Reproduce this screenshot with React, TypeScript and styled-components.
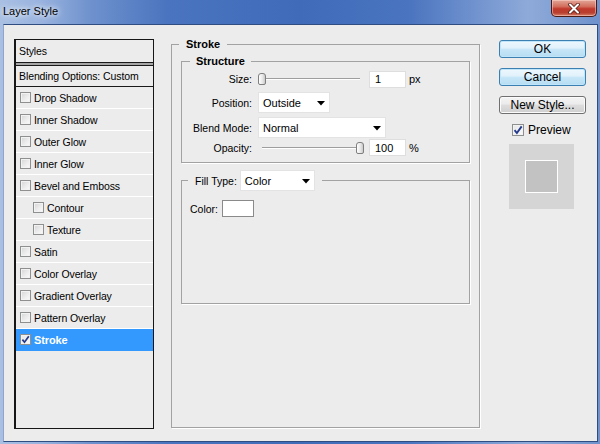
import React from 'react';
import styled, { createGlobalStyle } from 'styled-components';

const Global = createGlobalStyle`
  html, body { margin: 0; padding: 0; background: #fff; }
  body { font-family: "Liberation Sans", Arial, sans-serif; font-size: 10.5px; color: #000; }
  * { box-sizing: border-box; }
`;

const Window = styled.div`
  width: 600px;
  height: 444px;
  display: flex;
  flex-direction: column;
  padding: 0 2px 2px 3px;
  overflow: hidden;
  background: linear-gradient(90deg, #a9c0e3 0%, #98b2de 7%, #6f92cd 15%, #4a74bf 28%, #3f6bb9 50%, #4a74bf 68%, #7a9ad2 82%, #8eaad9 88%, #6f92cc 100%);
`;

const TitleBar = styled.div`
  height: 24px;
  flex: none;
  display: flex;
  align-items: flex-start;
  justify-content: space-between;
`;

const TitleText = styled.div`
  margin-top: 4px;
  height: 16px;
  line-height: 15px;
  font-size: 11px;
  color: #000;
  text-shadow: 0 0 5px #fff, 0 0 8px #e8f0fb;
`;

const CloseButton = styled.div`
  width: 46px;
  height: 17px;
  margin-right: 1px;
  border: 1px solid #4a1a14;
  border-top: none;
  border-radius: 0 0 5px 5px;
  background: linear-gradient(#e3a597 0%, #d3705f 40%, #c0392b 55%, #b8402f 80%, #d7806a 100%);
  box-shadow: inset 0 0 0 1px rgba(255, 220, 210, 0.5);
  display: flex;
  align-items: center;
  justify-content: center;
`;

const Client = styled.div`
  flex: 1;
  display: flex;
  align-items: flex-start;
  background: #ececec;
  border: 1px solid #2f4d80;
  border-left-color: #8ea6cc;
  padding: 13px 0 0 10px;
`;

/* ---------- Styles list ---------- */
const StylesPanel = styled.div`
  width: 140px;
  height: 390px;
  margin-top: 1px;
  flex: none;
  border: 1px solid #161616;
  border-left-width: 2px;
  background: #ececec;
  letter-spacing: -0.1px;
`;

const PanelHeader = styled.div`
  height: 22px;
  display: flex;
  align-items: center;
  padding-left: 3px;
`;

const DoubleRule = styled.div`
  height: 4px;
  border-top: 1px solid #1a1a1a;
  border-bottom: 1px solid #1a1a1a;
  background: #a6a6a6;
`;

const BlendRow = styled.div`
  height: 21px;
  display: flex;
  align-items: center;
  padding-left: 3px;
  border-bottom: 1px solid #1a1a1a;
`;

const StyleRow = styled.div<{ $indent?: boolean; $selected?: boolean }>`
  height: 22px;
  display: flex;
  align-items: center;
  gap: 3px;
  padding-left: ${(p) => (p.$indent ? 17 : 4)}px;
  border-bottom: 1px solid ${(p) => (p.$selected ? '#3399ff' : '#ffffff')};
  background: ${(p) => (p.$selected ? '#3399ff' : 'transparent')};
  color: ${(p) => (p.$selected ? '#fff' : '#000')};
  font-weight: ${(p) => (p.$selected ? 'bold' : 'normal')};
  font-size: ${(p) => (p.$selected ? '11px' : '10.5px')};
`;

const Box = styled.span<{ $size: number }>`
  width: ${(p) => p.$size}px;
  height: ${(p) => p.$size}px;
  flex: none;
  border: 1px solid #8e8f8f;
  background: linear-gradient(135deg, #d4d4d4 0%, #ececec 55%, #fbfbfb 100%);
  box-shadow: inset 0 0 0 1px #f2f2f2;
  display: flex;
  align-items: center;
  justify-content: center;
`;

const CheckedBox = styled(Box)`
  background: linear-gradient(135deg, #e6e6e6 0%, #fafafa 100%);
`;

const CheckBox: React.FC<{ checked?: boolean; size?: number }> = ({ checked, size = 11 }) =>
  checked ? (
    <CheckedBox $size={size}>
      <svg width={size - 2} height={size - 2} viewBox="0 0 9 9">
        <path d="M1.4 4.6 L3.5 7.2 L7.8 1.2" fill="none" stroke="#243a8c" strokeWidth="1.7" />
      </svg>
    </CheckedBox>
  ) : (
    <Box $size={size} />
  );

/* ---------- Main groups ---------- */
const Group = styled.fieldset<{ $w: number; $h: number }>`
  margin: 0;
  padding: 0;
  min-width: 0;
  width: ${(p) => p.$w}px;
  height: ${(p) => p.$h}px;
  flex: none;
  border: 1px solid #a2a2a2;
  box-shadow: 1px 1px 0 #ffffff;
`;

const MainGroup = styled(Group)`
  margin-left: 17px;
`;

const Legend = styled.legend<{ $ml: number; $px: number }>`
  margin-left: ${(p) => p.$ml}px;
  padding: 0 ${(p) => p.$px}px;
  font-weight: bold;
  font-size: 11px;
  line-height: 13px;
`;

const FillLegend = styled.legend`
  margin-left: 6px;
  padding: 0 7px;
  display: flex;
  align-items: center;
  gap: 3px;
  font-size: 10.5px;
`;

const GroupBody = styled.div`
  padding: 4px 9px 0 9px;
  display: flex;
  flex-direction: column;
  gap: 7px;
`;

const FormGrid = styled.div`
  display: grid;
  grid-template-columns: 70px 1fr;
  grid-template-rows: 20px 27px 23px 17px;
  column-gap: 6px;
  align-items: center;
  margin-top: 1px;
`;

const Label = styled.span`
  text-align: right;
  white-space: nowrap;
`;

const Controls = styled.div`
  display: flex;
  align-items: center;
`;

const Slider = styled.div`
  position: relative;
  width: 108px;
  height: 16px;
  flex: none;
`;

const Track = styled.div`
  position: absolute;
  left: 4px;
  right: 6px;
  top: 7px;
  height: 2px;
  border-top: 1px solid #9e9e9e;
  border-bottom: 1px solid #ffffff;
`;

const Thumb = styled.div`
  position: absolute;
  top: 2px;
  width: 8px;
  height: 12px;
  margin-left: -4px;
  border: 1px solid #7f7f7f;
  border-radius: 3px 3px 2px 2px;
  background: linear-gradient(90deg, #ffffff 0%, #e6e6e6 60%, #c9c9c9 100%);
`;

const RangeSlider: React.FC<{ value: number }> = ({ value }) => (
  <Slider>
    <Track />
    <Thumb style={{ left: `${4 + (value / 100) * 98}px` }} />
  </Slider>
);

const NumField = styled.div`
  width: 37px;
  height: 17px;
  margin-left: 3px;
  flex: none;
  background: #fff;
  border: 1px solid #dedede;
  padding-left: 5px;
  display: flex;
  align-items: center;
  font-size: 11px;
`;

const Unit = styled.span`
  margin-left: 3px;
  font-size: 11px;
`;

const SelectBox = styled.div<{ $w: number }>`
  width: ${(p) => p.$w}px;
  height: 21px;
  flex: none;
  background: #fff;
  border: 1px solid #e3e3e3;
  display: flex;
  align-items: center;
  justify-content: space-between;
  padding: 1px 4px 0 4px;
  font-size: 11px;
  font-weight: normal;
`;

const Select: React.FC<{ w: number; value: string }> = ({ w, value }) => (
  <SelectBox $w={w}>
    <span>{value}</span>
    <svg width="8" height="5" viewBox="0 0 8 5">
      <polygon points="0,0 8,0 4,4.5" fill="#000" />
    </svg>
  </SelectBox>
);

const ColorRow = styled.div`
  display: flex;
  align-items: center;
  gap: 4px;
  padding: 9px 0 0 8px;
`;

const Swatch = styled.div`
  width: 32px;
  height: 17px;
  background: #fff;
  border: 1px solid #8a8a8a;
`;

/* ---------- Right column ---------- */
const SideColumn = styled.div`
  width: 87px;
  margin-left: 19px;
  margin-top: 2px;
  flex: none;
  display: flex;
  flex-direction: column;
  gap: 10px;
`;

const Button = styled.div<{ $primary?: boolean }>`
  height: 18px;
  border-radius: 3px;
  border: 1px solid ${(p) => (p.$primary ? '#3c7fb1' : '#707070')};
  background: ${(p) =>
    p.$primary
      ? 'linear-gradient(#eef7fd 0%, #e0f1fb 45%, #c8e7f8 50%, #b6dcf2 100%)'
      : 'linear-gradient(#f4f4f4 0%, #ebebeb 45%, #dddddd 50%, #cfcfcf 100%)'};
  box-shadow: inset 0 0 0 1px ${(p) => (p.$primary ? '#bfe5fb' : '#fbfbfb')};
  display: flex;
  align-items: center;
  justify-content: center;
  font-size: 12px;
  color: #000;
`;

const PreviewRow = styled.div`
  display: flex;
  align-items: center;
  gap: 4px;
  padding-left: 13px;
  margin-top: -1px;
  font-size: 12px;
`;

const PreviewBox = styled.div`
  width: 65px;
  height: 65px;
  margin: -3px 0 0 10px;
  background: #d5d5d5;
  display: flex;
  align-items: center;
  justify-content: center;
`;

const PreviewSquare = styled.div`
  width: 33px;
  height: 33px;
  background: #c2c2c2;
  border: 1px solid #ffffff;
`;

const items: { label: string; indent?: boolean; checked?: boolean }[] = [
  { label: 'Drop Shadow' },
  { label: 'Inner Shadow' },
  { label: 'Outer Glow' },
  { label: 'Inner Glow' },
  { label: 'Bevel and Emboss' },
  { label: 'Contour', indent: true },
  { label: 'Texture', indent: true },
  { label: 'Satin' },
  { label: 'Color Overlay' },
  { label: 'Gradient Overlay' },
  { label: 'Pattern Overlay' },
  { label: 'Stroke', checked: true },
];

export default function App() {
  return (
    <>
      <Global />
      <Window>
        <TitleBar>
          <TitleText>Layer Style</TitleText>
          <CloseButton>
            <svg width="14" height="11" viewBox="0 0 14 11">
              <path d="M3 1.5 L11 9.5 M11 1.5 L3 9.5" stroke="#5a1c14" strokeWidth="3.6" strokeLinecap="round" />
              <path d="M3 1.5 L11 9.5 M11 1.5 L3 9.5" stroke="#ffffff" strokeWidth="2" strokeLinecap="round" />
            </svg>
          </CloseButton>
        </TitleBar>
        <Client>
          <StylesPanel>
            <PanelHeader>Styles</PanelHeader>
            <DoubleRule />
            <BlendRow>Blending Options: Custom</BlendRow>
            {items.map((it) => (
              <StyleRow key={it.label} $indent={it.indent} $selected={it.checked}>
                <CheckBox checked={it.checked} />
                <span>{it.label}</span>
              </StyleRow>
            ))}
          </StylesPanel>

          <MainGroup $w={309} $h={390}>
            <Legend $ml={7} $px={7}>Stroke</Legend>
            <GroupBody>
              <Group $w={289} $h={108}>
                <Legend $ml={8} $px={6}>Structure</Legend>
                <FormGrid>
                  <Label>Size:</Label>
                  <Controls>
                    <RangeSlider value={0} />
                    <NumField>1</NumField>
                    <Unit>px</Unit>
                  </Controls>
                  <Label>Position:</Label>
                  <Controls>
                    <Select w={72} value="Outside" />
                  </Controls>
                  <Label>Blend Mode:</Label>
                  <Controls>
                    <Select w={128} value="Normal" />
                  </Controls>
                  <Label>Opacity:</Label>
                  <Controls>
                    <RangeSlider value={100} />
                    <NumField>100</NumField>
                    <Unit>%</Unit>
                  </Controls>
                </FormGrid>
              </Group>
              <Group $w={289} $h={134}>
                <FillLegend>
                  <span>Fill Type:</span>
                  <Select w={75} value="Color" />
                </FillLegend>
                <ColorRow>
                  <span>Color:</span>
                  <Swatch />
                </ColorRow>
              </Group>
            </GroupBody>
          </MainGroup>

          <SideColumn>
            <Button $primary>OK</Button>
            <Button $primary>Cancel</Button>
            <Button>New Style...</Button>
            <PreviewRow>
              <CheckBox checked size={12} />
              <span>Preview</span>
            </PreviewRow>
            <PreviewBox>
              <PreviewSquare />
            </PreviewBox>
          </SideColumn>
        </Client>
      </Window>
    </>
  );
}
